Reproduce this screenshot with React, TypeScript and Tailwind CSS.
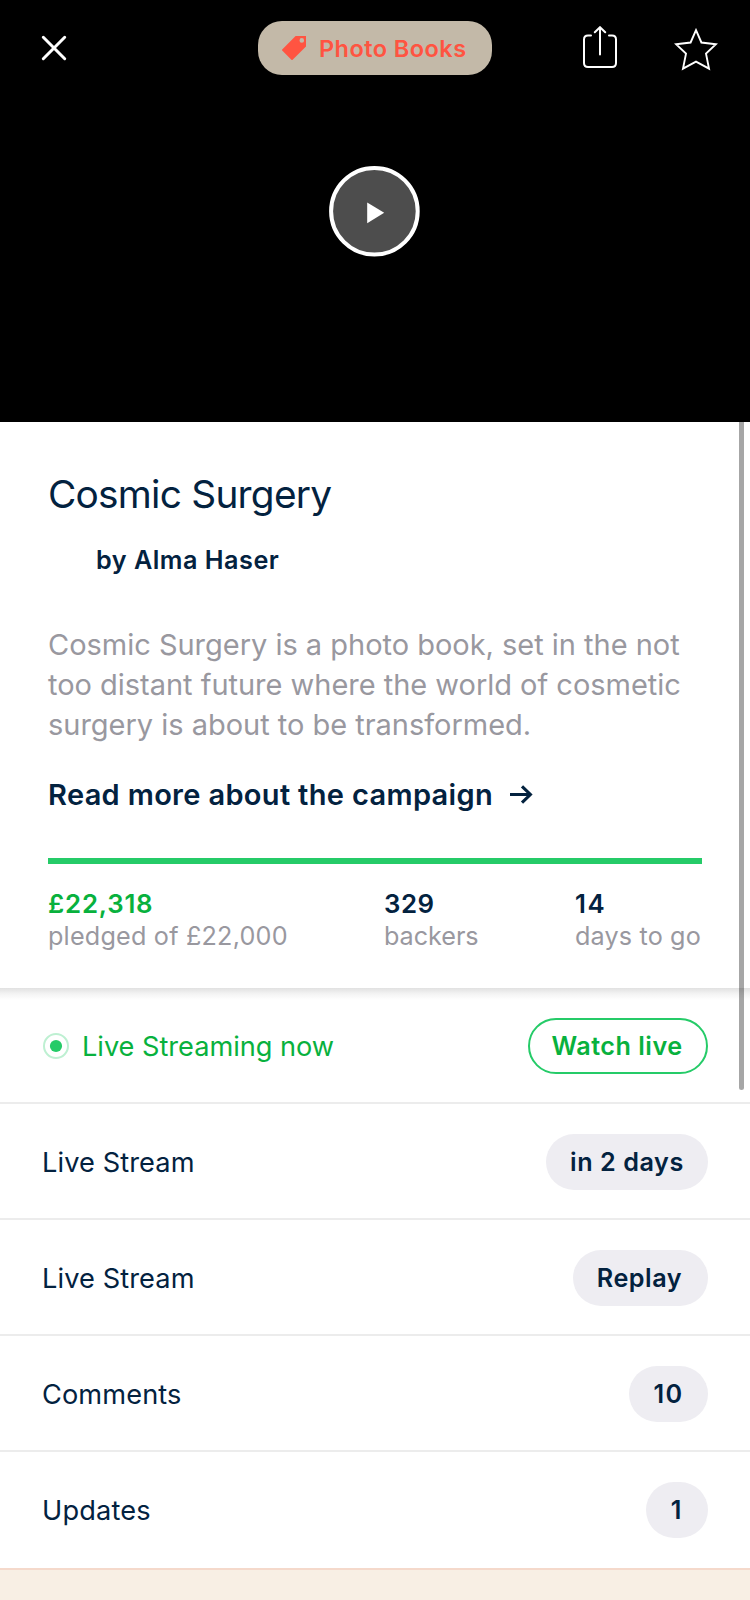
import React from "react";

function CloseIcon() {
  return (
    <svg width="26" height="26" viewBox="0 0 26 26" fill="none" stroke="#fff" strokeWidth="3" strokeLinecap="round">
      <path d="M2.3 2.3 23.7 23.7M23.7 2.3 2.3 23.7" />
    </svg>
  );
}

function TagIcon() {
  return (
    <svg width="24" height="24" viewBox="0 0 24 24" fill="#ff5441">
      <path
        fillRule="evenodd"
        d="M13.6 0H24V10.6L10.6 23.8Q10 24.3 9.4 23.8L.2 14.6Q-.3 14 .2 13.4ZM19.8 2.1a2.3 2.3 0 1 0 0 4.6 2.3 2.3 0 0 0 0-4.6Z"
      />
    </svg>
  );
}

function ShareIcon() {
  return (
    <svg width="34" height="44" viewBox="0 0 34 44" fill="none" stroke="#fff" strokeWidth="2" strokeLinecap="round">
      <path d="M8 9.4H5Q1 9.4 1 13.4V37Q1 41 5 41H29Q33 41 33 37V13.4Q33 9.4 29 9.4H26" />
      <path d="M17 28.4V1.6M11.8 6.2 17 1.2 22.2 6.2" />
    </svg>
  );
}

function StarIcon() {
  return (
    <svg width="44" height="44" viewBox="0 0 44 44" fill="none" stroke="#fff" strokeWidth="1.9" strokeMiterlimit="10">
      <path d="M22 2.2 27.4 14.5 42 16.2 32 25.6 35 40.6 22 33.6 9 40.6 12 25.6 2 16.2 16.6 14.5Z" />
    </svg>
  );
}

function PlayIcon() {
  return (
    <svg width="91" height="91" viewBox="0 0 91 91">
      <circle cx="45.4" cy="45.3" r="43.3" fill="#4d4d4d" stroke="#fff" strokeWidth="4" />
      <path d="M38.2 36.4V57.2L55.2 46.7Z" fill="#fff" />
    </svg>
  );
}

function ArrowIcon() {
  return (
    <svg width="23" height="20" viewBox="0 0 23 20" fill="none" stroke="#03223f" strokeWidth="3.1">
      <path d="M0 9.5H20.4M12 1.3 20.4 9.5 12 17.7" />
    </svg>
  );
}

function LiveIcon() {
  return (
    <svg width="26" height="26" viewBox="0 0 26 26">
      <circle cx="13" cy="13" r="12" fill="none" stroke="#bef0d2" strokeWidth="2" />
      <circle cx="13" cy="13" r="6.1" fill="#25cb68" />
    </svg>
  );
}

const rows = [
  { label: "Live Stream", value: "in 2 days", labelTracking: "tracking-[0.1px]", pill: "w-[162px] tracking-[0.55px]" },
  { label: "Live Stream", value: "Replay", labelTracking: "tracking-[0.1px]", pill: "w-[135px] pr-0.5 tracking-[0.55px]" },
  { label: "Comments", value: "10", labelTracking: "tracking-[0.1px]", pill: "w-[79px] tracking-[1.4px]" },
  { label: "Updates", value: "1", labelTracking: "tracking-[0.15px]", pill: "w-[62px] pr-0.5" },
];

export default function App() {
  return (
    <div className="relative flex h-[1600px] w-[750px] flex-col overflow-hidden bg-white font-['Inter','Liberation_Sans',sans-serif] text-[#03223f]">
      <header className="flex h-[422px] shrink-0 flex-col bg-black">
        <div className="flex h-24 items-center pr-8 pl-[41px]">
          <CloseIcon />
          <div className="ml-[191px] flex h-[54px] w-[234px] items-center gap-[13px] rounded-[24px] bg-[#c3b9a8] pl-6 text-[23.5px] leading-8 font-semibold tracking-[0.45px] whitespace-nowrap text-[#ff5441]">
            <TagIcon />
            <span className="pt-px">Photo Books</span>
          </div>
          <div className="ml-[91px]">
            <ShareIcon />
          </div>
          <div className="mt-[3px] ml-[57px]">
            <StarIcon />
          </div>
        </div>
        <div className="flex pt-[70px] pl-[329px]">
          <PlayIcon />
        </div>
      </header>

      <section className="flex h-[566px] shrink-0 flex-col pt-12 pr-12 pl-12">
        <h1 className="text-[38.8px] leading-[48px] font-normal tracking-[-0.75px]">Cosmic Surgery</h1>
        <p className="mt-[26px] pl-12 text-[25.2px] leading-8 font-semibold tracking-[0.5px]">by Alma Haser</p>
        <p className="mt-[49px] text-[29px] leading-10 tracking-[-0.02px] whitespace-nowrap text-[#99989f]">
          Cosmic Surgery is a photo book, set in the not
          <br />
          too distant future where the world of cosmetic
          <br />
          surgery is about to be transformed.
        </p>
        <div className="mt-[30px] flex items-center gap-[17px] text-[29px] leading-10 font-semibold">
          <span className="tracking-[0.33px]">Read more about the campaign</span>
          <ArrowIcon />
        </div>
        <div className="mt-[43px] h-1.5 w-[654px] shrink-0 bg-[#25cb68]" />
        <dl className="mt-6 grid grid-cols-[336px_191px_1fr] text-[25.2px] leading-8 whitespace-nowrap">
          <div>
            <dt className="text-[25.8px] font-semibold tracking-[0.8px] text-[#08b13d]">£22,318</dt>
            <dd className="tracking-[0.2px] text-[#99989f]">pledged of £22,000</dd>
          </div>
          <div>
            <dt className="text-[25.8px] font-semibold tracking-[0.5px]">329</dt>
            <dd className="tracking-[-0.05px] text-[#99989f]">backers</dd>
          </div>
          <div>
            <dt className="text-[25.8px] font-semibold tracking-[1.6px]">14</dt>
            <dd className="tracking-[0.15px] text-[#99989f]">days to go</dd>
          </div>
        </dl>
      </section>

      <div className="flex h-[116px] shrink-0 items-center justify-between border-b-2 border-[#ececec] bg-[linear-gradient(to_bottom,#e1e1e1,#f4f4f4_6px,#fff_12px)] pr-[42px] pl-[43px]">
        <div className="flex items-center gap-[13px] pt-0.5 text-[27.2px] leading-9 tracking-[-0.03px] text-[#08b13d]">
          <LiveIcon />
          <span className="pt-0.5">Live Streaming now</span>
        </div>
        <button className="mt-0.5 flex h-14 w-[180px] items-center justify-center rounded-full border-2 border-[#25cb68] bg-white pt-0.5 pr-0.5 text-[25.2px] font-semibold tracking-[0.5px] text-[#08b13d]">
          Watch live
        </button>
      </div>

      {rows.map((row, i) => (
        <div
          key={i}
          className={
            "flex h-[116px] shrink-0 items-center justify-between border-b-2 pt-0.5 pr-[42px] pl-[42px] " +
            (i === rows.length - 1 ? "border-white" : "border-[#ececec]")
          }
        >
          <span className={"pt-0.5 text-[27.2px] leading-9 " + row.labelTracking}>{row.label}</span>
          <span
            className={
              "flex h-14 items-center justify-center rounded-full bg-[#eeedf2] pt-0.5 text-[25.2px] font-semibold " + row.pill
            }
          >
            {row.value}
          </span>
        </div>
      ))}
      <footer className="h-8 shrink-0 border-t-2 border-[#f5d9cb] bg-[#f8efe4]" />

      <div className="absolute top-[422px] left-[739px] h-[668px] w-[5px] rounded-b-full bg-black/35" />
    </div>
  );
}
